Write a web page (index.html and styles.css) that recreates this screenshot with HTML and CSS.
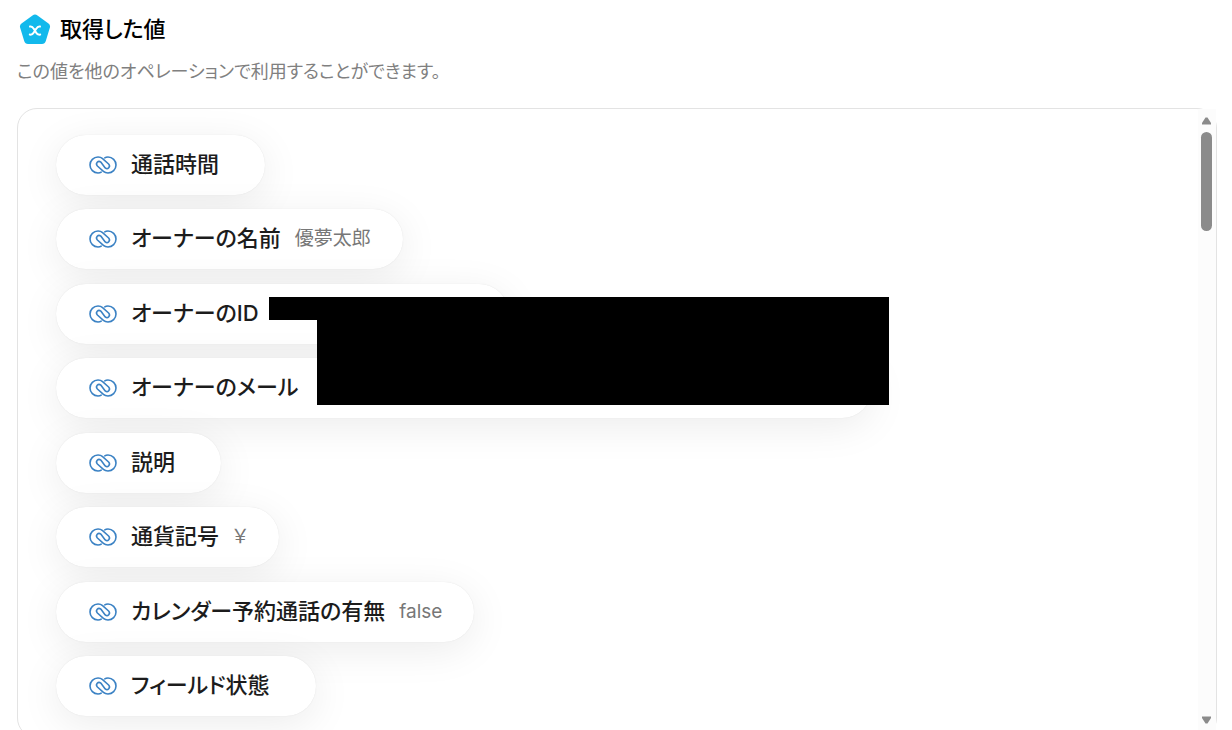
FILE: index.html
```html
<!DOCTYPE html>
<html lang="ja">
<head>
<meta charset="utf-8">
<title>取得した値</title>
<link rel="stylesheet" href="styles.css">
</head>
<body>
<svg class="sprite" aria-hidden="true">
  <symbol id="link" viewBox="0 0 28 18">
    <path d="M12.200 16.200Q11 17 9 17A8 8 0 0 1 9 1Q11.800 1 13.600 2.600L19.600 8C22 10.600 18.800 14 16.200 11.900L11.800 6.100C9.200 4 6 7.400 8.400 10L14.400 15.400Q16.200 17 19 17A8 8 0 0 0 19 1Q17 1 15.800 1.800" fill="none" stroke="currentColor" stroke-width="1.600" stroke-linecap="round" stroke-linejoin="round"/>
  </symbol>
</svg>
<main class="page">
  <header class="header">
    <h1 class="title">
      <svg class="logo" viewBox="0 0 32 31" aria-hidden="true">
        <path d="M13.500 1.400Q16 -.3 18.500 1.400L29.500 9.500Q31.600 11.200 30.900 13.500L26.800 27Q25.900 30 23 30H9Q6.100 30 5.200 27L1.100 13.500Q.4 11.200 2.500 9.500Z" fill="#12b9ec"/>
        <path d="M11 12.600Q13.400 12.200 14.600 14.600L17.200 18.800Q18.400 21 21.200 20.600M21 12.600Q18.600 12.200 17.400 14.600L14.600 18.800Q13.400 21 10.800 20.600" fill="none" stroke="#fff" stroke-width="2" stroke-linecap="round"/>
      </svg>
      取得した値
    </h1>
    <p class="lead">この値を他のオペレーションで利用することができます。</p>
  </header>
  <section class="panel">
    <ul class="list">
      <li class="pill"><svg class="icon"><use href="#link"/></svg><span class="name">通話時間</span><span class="value"></span></li>
      <li class="pill"><svg class="icon"><use href="#link"/></svg><span class="name">オーナーの名前</span><span class="value">優夢太郎</span></li>
      <li class="pill"><svg class="icon"><use href="#link"/></svg><span class="name">オーナーのID</span><span class="value hidden-id"></span></li>
      <li class="pill"><svg class="icon"><use href="#link"/></svg><span class="name">オーナーのメール</span><span class="value hidden-mail"></span></li>
      <li class="pill"><svg class="icon"><use href="#link"/></svg><span class="name">説明</span><span class="value"></span></li>
      <li class="pill"><svg class="icon"><use href="#link"/></svg><span class="name">通貨記号</span><span class="value">￥</span></li>
      <li class="pill"><svg class="icon"><use href="#link"/></svg><span class="name">カレンダー予約通話の有無</span><span class="value">false</span></li>
      <li class="pill"><svg class="icon"><use href="#link"/></svg><span class="name">フィールド状態</span><span class="value"></span></li>
    </ul>
    <div class="scrollbar" aria-hidden="true">
      <svg class="arrow" viewBox="0 0 9 8"><path d="M3.500 .5H5.500L9 6V7.500H0V6Z" fill="#8b8b8b"/></svg>
      <div class="thumb"></div>
      <svg class="arrow arrow-down" viewBox="0 0 9 8"><path d="M3.500 7.500H5.500L9 2V.5H0V2Z" fill="#8b8b8b"/></svg>
    </div>
  </section>
</main>
<div class="mask mask-small"></div>
<div class="mask mask-large"></div>
</body>
</html>
```

FILE: styles.css
```css
* {
  box-sizing: border-box;
}

body {
  margin: 0;
  background: #fff;
  font-family: Inter, "Noto Sans CJK JP", sans-serif;
  font-feature-settings: "palt";
  overflow: hidden;
}

.sprite {
  position: absolute;
  width: 0;
  height: 0;
}

.page {
  display: flex;
  flex-direction: column;
  height: calc(100vh + 8px);
  padding: 13px 15px 0 17px;
}

.title {
  display: flex;
  align-items: center;
  gap: 9px;
  margin: 0;
  padding-left: 2px;
  font-size: 22px;
  line-height: 32px;
  font-weight: 500;
  color: #000;
}

.logo {
  width: 32px;
  height: 31px;
}

.lead {
  margin: 14px 0 23px;
  font-size: 18px;
  line-height: 26px;
  font-weight: 400;
  color: #808080;
}

.panel {
  display: flex;
  flex: 1;
  min-height: 0;
  border: 1px solid #e3e3e3;
  border-radius: 20px;
}

.list {
  display: flex;
  flex: 1;
  flex-direction: column;
  align-items: flex-start;
  justify-content: space-between;
  margin: 0;
  padding: 26px 38px 21px;
  border-radius: 20px 0 0 20px;
  list-style: none;
  overflow: hidden;
}

.pill {
  display: flex;
  flex: none;
  align-items: center;
  height: 60px;
  padding: 0 32px 0 33px;
  border-radius: 30px;
  background: #fff;
  box-shadow: 0 8px 40px rgba(0, 0, 0, 0.08), 0 0 1px rgba(0, 0, 0, 0.12);
}

.icon {
  width: 28px;
  height: 18px;
  margin-right: 14px;
  color: #3b82c4;
}

.name {
  margin-right: 14px;
  padding-bottom: 2px;
  font-size: 22px;
  line-height: 32px;
  font-weight: 500;
  color: #1c1c1c;
}

.value {
  font-size: 19px;
  line-height: 28px;
  color: #777;
}

.hidden-id {
  width: 204px;
}

.hidden-mail {
  width: 528px;
}

.scrollbar {
  display: flex;
  flex-direction: column;
  align-items: center;
  width: 18px;
  padding: 8px 1px 13px 0;
  background: #fcfcfc;
}

.arrow {
  width: 9px;
  height: 8px;
}

.arrow-down {
  margin-top: auto;
}

.thumb {
  width: 11px;
  height: 99px;
  margin-top: 7px;
  border-radius: 6px;
  background: #8b8b8b;
}

.mask {
  position: absolute;
  background: #000;
}

.mask-small {
  left: 269px;
  top: 297px;
  width: 48px;
  height: 23px;
}

.mask-large {
  left: 317px;
  top: 297px;
  width: 572px;
  height: 108px;
}
```
